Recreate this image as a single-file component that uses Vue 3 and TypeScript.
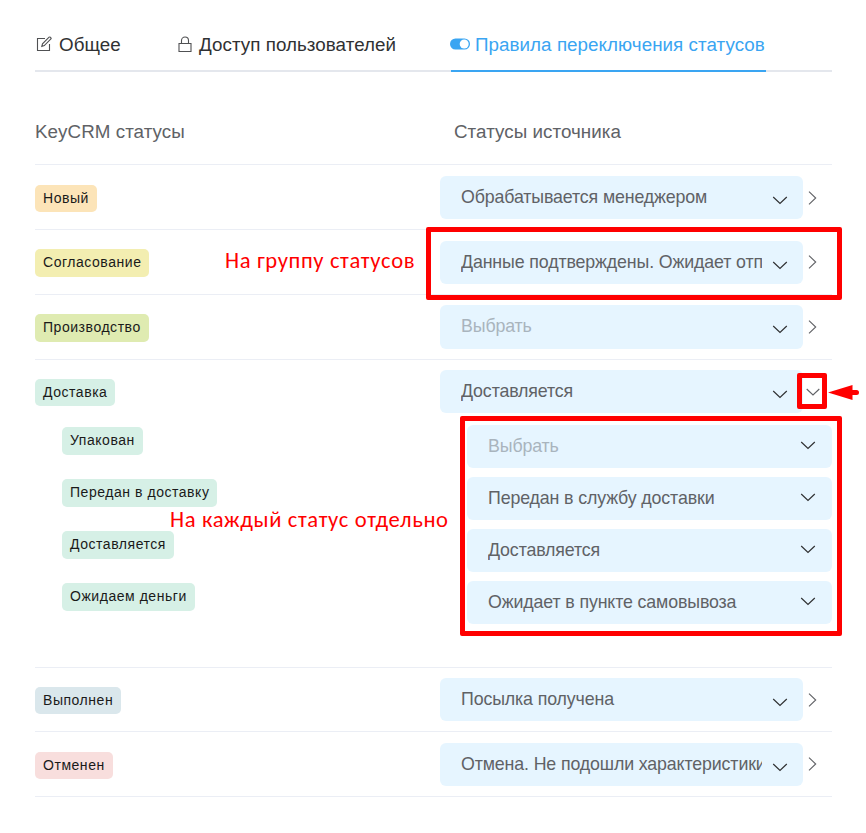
<script setup lang="ts">
interface SubStatus {
  name: string
  source: string | null
}
interface StatusGroup {
  id: string
  name: string
  source: string | null
  open?: boolean
  children?: SubStatus[]
}

const groups: StatusGroup[] = [
  { id: 'new', name: 'Новый', source: 'Обрабатывается менеджером' },
  { id: 'approval', name: 'Согласование', source: 'Данные подтверждены. Ожидает отп' },
  { id: 'production', name: 'Производство', source: null },
  {
    id: 'delivery',
    name: 'Доставка',
    source: 'Доставляется',
    open: true,
    children: [
      { name: 'Упакован', source: null },
      { name: 'Передан в доставку', source: 'Передан в службу доставки' },
      { name: 'Доставляется', source: 'Доставляется' },
      { name: 'Ожидаем деньги', source: 'Ожидает в пункте самовывоза' },
    ],
  },
  { id: 'done', name: 'Выполнен', source: 'Посылка получена' },
  { id: 'cancelled', name: 'Отменен', source: 'Отмена. Не подошли характеристики' },
]
</script>

<template>
  <main class="page">
    <nav class="tabs">
      <a class="tab tab-general">
        <svg class="icon-edit" width="16" height="16" viewBox="0 0 16 16">
          <path d="M9 2.500H1.500v12h12V8" />
          <path d="M5.800 10.400l.7-2.600 6.600-6.600q.6-.5 1.200 0l.6.6q.5.6 0 1.200L8.300 9.600z" />
        </svg>
        <span>Общее</span>
      </a>
      <a class="tab tab-access">
        <svg class="icon-lock" width="14" height="17" viewBox="0 0 14 17">
          <path d="M1 7.500h12v8H1zM3.500 7.500V4.500a3.500 3.500 0 0 1 7 0v3" />
        </svg>
        <span>Доступ пользователей</span>
      </a>
      <a class="tab tab-rules active">
        <svg class="icon-toggle" width="20" height="12" viewBox="0 0 20 12">
          <rect x="0" y=".5" width="20" height="11" rx="5.500" />
          <circle cx="14.200" cy="6" r="4.500" />
        </svg>
        <span>Правила переключения статусов</span>
      </a>
    </nav>

    <header class="head">
      <span>KeyCRM статусы</span>
      <span>Статусы источника</span>
    </header>

    <section v-for="g in groups" :key="g.id" class="group" :class="g.id">
      <div class="row">
        <div class="name"><span class="tag">{{ g.name }}</span></div>
        <div class="select" :class="{ empty: !g.source }">
          <span class="value">{{ g.source ?? 'Выбрать' }}</span>
          <svg class="chevron" width="16" height="10" viewBox="0 0 16 10"><path d="M1.200 1l6.800 6.500L14.800 1" /></svg>
        </div>
        <svg v-if="g.open" class="expander open" width="14" height="9" viewBox="0 0 14 9"><path d="M.7 1l6.300 6 6.300-6" /></svg>
        <svg v-else class="expander" width="9" height="14" viewBox="0 0 9 14"><path d="M1 .7l6.700 6.300L1 13.300" /></svg>
      </div>
      <div v-if="g.children" class="children">
        <div v-for="c in g.children" :key="c.name" class="child">
          <div class="name"><span class="tag">{{ c.name }}</span></div>
          <div class="select" :class="{ empty: !c.source }">
            <span class="value">{{ c.source ?? 'Выбрать' }}</span>
            <svg class="chevron" width="16" height="10" viewBox="0 0 16 10"><path d="M1.200 1l6.800 6.500L14.800 1" /></svg>
          </div>
        </div>
      </div>
    </section>

    <div class="mark mark-group"></div>
    <div class="mark mark-each"></div>
    <div class="mark mark-expander"></div>
    <svg class="arrow" width="32" height="17" viewBox="0 0 32 17">
      <path d="M0 8.500L24.500 1v5H28.500a2.500 2.500 0 0 1 0 5H24.500v5z" />
    </svg>
    <span class="note note-group">На группу статусов</span>
    <span class="note note-each">На каждый статус отдельно</span>
  </main>
</template>

<style>
body {
  margin: 0;
  background: #fff;
}
</style>

<style scoped>
.page {
  position: relative;
  box-sizing: border-box;
  width: 866px;
  height: 833px;
  padding: 0 34px 0 35px;
  overflow: hidden;
  font-family: "Liberation Sans", Arial, sans-serif;
  font-size: 18.8px;
  letter-spacing: 0.05px;
  color: #606266;
}
svg {
  flex: none;
  fill: none;
}
.tabs {
  display: flex;
  box-sizing: border-box;
  height: 72px;
  border-bottom: 2px solid #e4e7ed;
}
.tab {
  display: flex;
  box-sizing: border-box;
  height: 72px;
  padding-top: 18px;
  line-height: 54px;
  color: #303133;
  white-space: nowrap;
}
.tab-general {
  width: 143px;
  padding-left: 1px;
}
.tab-access {
  width: 273px;
}
.tab.active {
  width: 315px;
  color: #3aa5f2;
  border-bottom: 2px solid #3aa5f2;
}
.icon-edit,
.icon-lock {
  stroke: #505153;
  stroke-width: 1.1;
}
.icon-edit {
  margin: 18px 7px 0 0;
}
.icon-lock {
  margin: 18px 7px 0 0;
}
.icon-toggle {
  margin: 20px 5px 0 -1px;
}
.icon-toggle rect {
  fill: #3aa5f2;
}
.icon-toggle circle {
  fill: #fff;
}
.head {
  display: flex;
  box-sizing: border-box;
  height: 93px;
  padding-top: 46px;
  line-height: 28px;
  border-bottom: 1px solid #ebeef5;
}
.head span {
  flex: none;
  width: 419px;
  white-space: nowrap;
}
.head span:last-child {
  width: 378px;
}
.group {
  box-sizing: border-box;
  height: 65px;
  padding-top: 11px;
  border-bottom: 1px solid #ebeef5;
}
.group.production,
.group.delivery,
.group.done {
  padding-top: 10px;
}
.group.delivery {
  height: 308px;
}
.group.done {
  height: 64px;
}
.row,
.child {
  display: flex;
  align-items: flex-start;
}
.row {
  height: 43px;
}
.name {
  width: 405px;
  padding-top: 9px;
}
.approval .name {
  padding-top: 8px;
}
.tag {
  display: block;
  box-sizing: border-box;
  width: max-content;
  height: 27px;
  padding: 0 8px;
  border-radius: 5px;
  background: #d6f0e6;
  color: #1a1a1a;
  font-size: 14px;
  line-height: 26px;
  letter-spacing: 0.54px;
  white-space: nowrap;
}
.new .tag {
  background: #fce4b8;
}
.approval .tag {
  height: 28px;
  background: #f3eeb1;
}
.production .tag {
  height: 28px;
  background: #dfebb1;
}
.done .tag {
  background: #dae7ec;
}
.cancelled .tag {
  background: #f8dedd;
}
.select {
  display: flex;
  box-sizing: border-box;
  width: 363px;
  height: 43px;
  padding: 0 15px 0 21px;
  border-radius: 6px;
  background: #e6f5ff;
}
.production .select {
  height: 44px;
}
.value {
  flex: 1;
  overflow: hidden;
  margin-right: 10px;
  font-size: 17.8px;
  line-height: 42px;
  letter-spacing: -0.13px;
  white-space: nowrap;
}
.empty .value {
  color: #a9b4bd;
}
.chevron {
  margin-top: 20px;
  stroke: #303133;
  stroke-width: 1.2;
}
.expander {
  margin: 15px 0 0 5px;
  stroke: #606266;
  stroke-width: 1.1;
}
.approval .expander,
.cancelled .expander {
  margin-top: 14px;
}
.expander.open {
  margin: 18px 0 0 3px;
}
.children {
  display: flex;
  flex-direction: column;
  gap: 9px;
  padding: 12px 0 0 27px;
}
.child .name {
  padding-top: 2px;
}
.child .tag {
  height: 28px;
  line-height: 27px;
}
.child .select {
  width: 365px;
  padding-right: 16px;
}
.child .chevron {
  margin-top: 16px;
}
.mark {
  position: absolute;
  box-sizing: border-box;
  border: 5px solid #f00;
  border-radius: 2px;
}
.mark-group {
  left: 426px;
  top: 227px;
  width: 416px;
  height: 73px;
}
.mark-each {
  left: 460px;
  top: 416px;
  width: 382px;
  height: 220px;
}
.mark-expander {
  left: 797px;
  top: 373px;
  width: 30px;
  height: 36px;
}
.arrow {
  position: absolute;
  left: 828px;
  top: 384px;
  fill: #f00;
}
.note {
  position: absolute;
  color: #f00;
  font-family: Carlito, "Open Sans", sans-serif;
  font-size: 22.6px;
  line-height: 28px;
  letter-spacing: 0.63px;
  white-space: nowrap;
}
.note-group {
  left: 225px;
  top: 246px;
}
.note-each {
  left: 170px;
  top: 505px;
}
</style>
